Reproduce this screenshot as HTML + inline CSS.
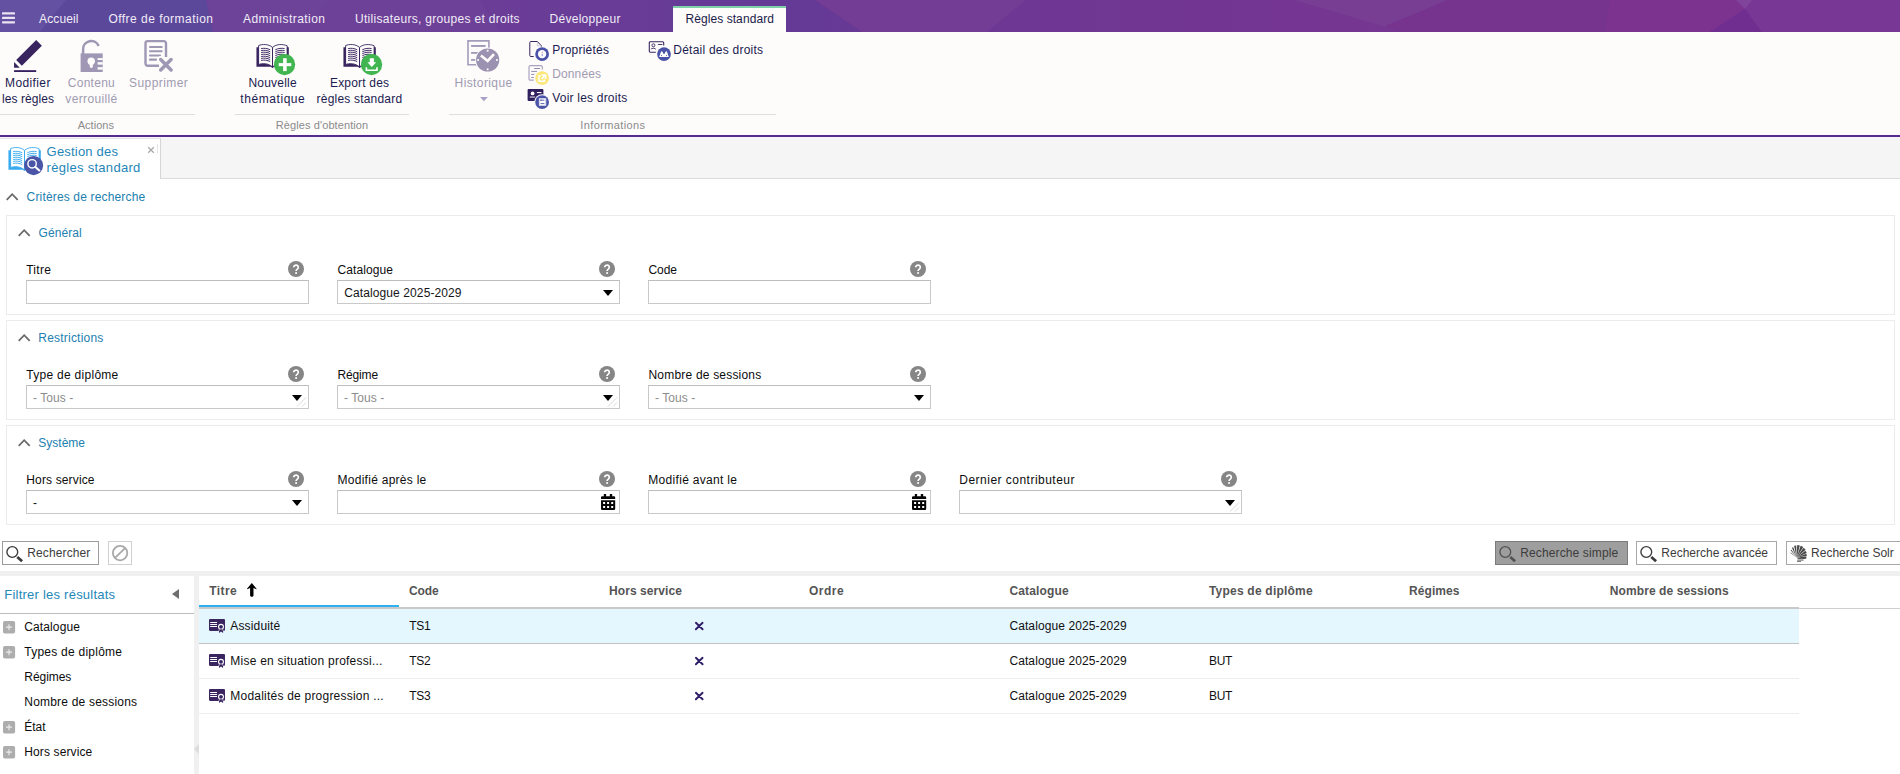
<!DOCTYPE html>
<html lang="fr"><head><meta charset="utf-8"><title>Règles standard</title>
<style>
*{margin:0;padding:0;box-sizing:border-box}
html,body{width:1900px;height:774px;overflow:hidden;background:#fff}
body{position:relative;font-family:"Liberation Sans",sans-serif;font-size:12px;color:#111}
.a,.t,svg.i{position:absolute}
.t{white-space:nowrap;display:block}
svg.i{overflow:visible}
.hdr{left:0;top:0;width:1900px;height:32px}
.atab{left:673px;top:6px;width:113px;height:26px;background:#fdfcfb;border-top:2px solid #7fd0a8}
.rib{left:0;top:32px;width:1900px;height:103px;background:#fdfcfb}
.ribline{left:0;top:135px;width:1900px;height:2px;background:#562a8e}
.gsep{top:114px;height:1px;background:#dedede}
.strip{left:0;top:137px;width:1900px;height:42px;background:#f5f5f5;border-bottom:1px solid #dcdcdc}
.ttab{left:0;top:138px;width:161px;height:41px;background:#fff;border-top:1px solid #e2e2e2;border-right:1px solid #d6d6d6}
.fs{left:6px;width:1889px;height:100px;border:1px solid #ececec;background:#fff}
.in{width:283px;height:24px;border:1px solid #c9c9c9;background:#fff;border-top-color:#bdbdbd}
.btn{top:541px;height:24px;border:1px solid #a8a8a8;background:#fff}
.band{left:0;top:571px;width:1900px;height:5px;background:#f0f0f0}
.split{left:194px;top:576px;width:5px;height:198px;background:#f0f0f0}
.fhdr{left:0;top:613px;width:194px;height:1px;background:#bdbdbd}
.plus{left:3.1px;width:12.1px;height:12.5px;border-radius:1.8px;background:#adadad}
.plus:before{content:"";position:absolute;left:3px;top:5.55px;width:6px;height:1.3px;background:#ececec}
.plus:after{content:"";position:absolute;left:5.35px;top:3.1px;width:1.3px;height:6.2px;background:#ececec}
.help{width:16px;height:16px;border-radius:8px;background:#868686}
.arr{width:0;height:0;border-left:5.5px solid transparent;border-right:5.5px solid transparent;border-top:6px solid #000}

</style></head>
<body>
<svg class="i hdr" viewBox="0 0 1900 32" preserveAspectRatio="none">
<defs><linearGradient id="hg" x1="0" x2="1" y1="0" y2="0">
<stop offset="0" stop-color="#5d499c"/><stop offset="0.25" stop-color="#6b3d97"/><stop offset="0.42" stop-color="#643a96"/>
<stop offset="0.54" stop-color="#6e3793"/><stop offset="0.7" stop-color="#753692"/><stop offset="1" stop-color="#7a3693"/></linearGradient></defs>
<rect width="1900" height="32" fill="url(#hg)"/>
<polygon points="0,0 66,0 40,32 0,32" fill="#6551a1"/>
<polygon points="66,0 206,0 213,32 40,32" fill="#5c489b"/>
<polygon points="206,0 330,0 300,32 213,32" fill="#6c4399"/>
<polygon points="330,0 480,0 500,32 300,32" fill="#6e4198"/>
<polygon points="815,0 1026,0 987,32 862,32" fill="#733c95"/>
<polygon points="1295,0 1447,0 1385,27" fill="#783e94"/>
<polygon points="1385,26 1450,0 1620,0 1620,32 1400,32" fill="#76348f"/>
<polygon points="1610,0 1740,0 1745,9 1710,32 1605,32" fill="#7c328f"/><polygon points="1710,32 1745,9 1762,32" fill="#702e91"/>
<polygon points="1748,0 1900,0 1900,32 1762,32 1745,9" fill="#783794"/><polygon points="1736,0 1752,0 1745,9" fill="#80459a"/>
</svg>
<svg class="i" style="left:2px;top:12px" width="13" height="12" viewBox="0 0 13 12"><g fill="#e9e3f2"><rect y="0.3" width="13" height="2.2" rx=".6"/><rect y="4.8" width="13" height="2.2" rx=".6"/><rect y="9.2" width="13" height="2.2" rx=".6"/></g></svg>
<div class="a atab"></div>
<div class="a rib"></div><div class="a ribline"></div>
<div class="a gsep" style="left:0px;width:195px"></div>
<div class="a gsep" style="left:235px;width:174px"></div>
<div class="a gsep" style="left:449px;width:327px"></div>
<svg class="i" style="left:13px;top:40px" width="30" height="32" viewBox="0 0 30 32"><g fill="#38245f">
<polygon points="23.2,-0.1 28.9,5.7 8.9,25.7 3.2,19.9"/><polygon points="1.05,22.05 1.05,27.8 6.8,27.8"/></g><rect x="1.05" y="30.2" width="22.15" height="1.75" fill="#2c1759"/></svg>
<svg class="i" style="left:80px;top:40px" width="23" height="32" viewBox="0 0 23 32">
<path d="M3.1,14 V9.3 A8.1,8.1 0 0 1 18.64,5.9" fill="none" stroke="#a097b4" stroke-width="2.5"/>
<rect x="0.6" y="13.4" width="22.1" height="18.6" fill="#a097b4"/>
<circle cx="11.2" cy="21.3" r="3.7" fill="#fdfcfb"/><path d="M9.7,22 H12.9 V26.3 a1.6,1.6 0 0 1 -3.2,0 Z" fill="#fdfcfb"/>
<rect x="17.6" y="18.1" width="5.2" height="1.9" fill="#fdfcfb"/><rect x="17.6" y="22.2" width="5.2" height="2.4" fill="#fdfcfb"/><rect x="17.6" y="27.2" width="5.2" height="2.4" fill="#fdfcfb"/></svg>
<svg class="i" style="left:144px;top:40px" width="30" height="32" viewBox="0 0 30 32">
<path d="M22,17 V3.3 a2.2,2.2 0 0 0 -2.2,-2.2 H3.7 a2.2,2.2 0 0 0 -2.2,2.2 V23.6 a2.2,2.2 0 0 0 2.2,2.2 H15" fill="none" stroke="#a097b4" stroke-width="2.4"/>
<g stroke="#a097b4" stroke-width="2.1" stroke-linecap="round"><path d="M6,7.05 H17.7 M6,11.25 H17.7 M6,15.45 H16 M6,19.65 H12"/></g>
<path d="M16.5,19.3 L27.3,30.1 M27.3,19.3 L16.5,30.1" stroke="#fdfcfb" stroke-width="6" stroke-linecap="round"/>
<path d="M16.7,19.5 L27.1,29.9 M27.1,19.5 L16.7,29.9" stroke="#a097b4" stroke-width="3.5" stroke-linecap="round"/></svg>
<svg class="i" style="left:256px;top:43px" width="33" height="26" viewBox="0 0 33 26">
<path d="M2.6,2.6 C6,1.0 12.5,0.8 16.5,4.4 C20.5,0.8 27,1.0 31.2,2.8 V21.6 C27,20 20.5,20.2 16.5,24 C12.5,20.2 6,20 2.6,21.6 Z" fill="#fdfcfb" stroke="#38245f" stroke-width="0.9" stroke-linejoin="round"/>
<path d="M0.45,4.3 H2.8 V21.4 C7,20 13,20.6 16.5,23.9 V25.1 L14.7,23.75 H0.45 Z" fill="#38245f"/>
<path d="M30.9,4.3 H32.8 V23.75 H18.3 L16.5,25.1 V23.9 C20,20.6 26.5,20 30.9,21.4 Z" fill="#38245f"/>
<path d="M16.5,4.4 V24.5" stroke="#38245f" stroke-width="1"/>
<g stroke="#38245f" stroke-width="0.95" fill="none">
<path d="M5.1,5.6 C8,5 11.5,5.3 14.2,6.8 M5.1,7.6 C8,7 11.5,7.3 14.2,8.8 M5.1,9.5 C8,8.9 11.5,9.2 14.2,10.7 M5.1,11.5 C8,10.9 11.5,11.2 14.2,12.7 M5.1,13.5 C8,12.9 11.5,13.2 14.2,14.7 M5.1,15.4 C8,14.8 11.5,15.1 14.2,16.6 M5.1,17.4 C8,16.8 11.5,17.1 14.2,18.6"/>
<path d="M28.6,5.6 C25.7,5 22.2,5.3 19.3,6.8 M28.6,7.6 C25.7,7 22.2,7.3 19.3,8.8 M28.6,9.5 C25.7,8.9 22.2,9.2 19.3,10.7 M28.6,11.5 C25.7,10.9 22.2,11.2 19.3,12.7 M28.6,13.5 C25.7,12.9 22.2,13.2 19.3,14.7 M28.6,15.4 C25.7,14.8 22.2,15.1 19.3,16.6 M28.6,17.4 C25.7,16.8 22.2,17.1 19.3,18.6"/></g></svg>
<svg class="i" style="left:274px;top:54px" width="21.2" height="21.2" viewBox="0 0 21.2 21.2"><circle cx="10.6" cy="10.6" r="10.6" fill="#40b550"/><path d="M10.9,4.2 V17.1" stroke="#fff" stroke-width="3.6"/><path d="M4.7,10.65 H17.3" stroke="#fff" stroke-width="3.1"/></svg>
<svg class="i" style="left:342.7px;top:43px" width="33" height="26" viewBox="0 0 33 26">
<path d="M2.6,2.6 C6,1.0 12.5,0.8 16.5,4.4 C20.5,0.8 27,1.0 31.2,2.8 V21.6 C27,20 20.5,20.2 16.5,24 C12.5,20.2 6,20 2.6,21.6 Z" fill="#fdfcfb" stroke="#38245f" stroke-width="0.9" stroke-linejoin="round"/>
<path d="M0.45,4.3 H2.8 V21.4 C7,20 13,20.6 16.5,23.9 V25.1 L14.7,23.75 H0.45 Z" fill="#38245f"/>
<path d="M30.9,4.3 H32.8 V23.75 H18.3 L16.5,25.1 V23.9 C20,20.6 26.5,20 30.9,21.4 Z" fill="#38245f"/>
<path d="M16.5,4.4 V24.5" stroke="#38245f" stroke-width="1"/>
<g stroke="#38245f" stroke-width="0.95" fill="none">
<path d="M5.1,5.6 C8,5 11.5,5.3 14.2,6.8 M5.1,7.6 C8,7 11.5,7.3 14.2,8.8 M5.1,9.5 C8,8.9 11.5,9.2 14.2,10.7 M5.1,11.5 C8,10.9 11.5,11.2 14.2,12.7 M5.1,13.5 C8,12.9 11.5,13.2 14.2,14.7 M5.1,15.4 C8,14.8 11.5,15.1 14.2,16.6 M5.1,17.4 C8,16.8 11.5,17.1 14.2,18.6"/>
<path d="M28.6,5.6 C25.7,5 22.2,5.3 19.3,6.8 M28.6,7.6 C25.7,7 22.2,7.3 19.3,8.8 M28.6,9.5 C25.7,8.9 22.2,9.2 19.3,10.7 M28.6,11.5 C25.7,10.9 22.2,11.2 19.3,12.7 M28.6,13.5 C25.7,12.9 22.2,13.2 19.3,14.7 M28.6,15.4 C25.7,14.8 22.2,15.1 19.3,16.6 M28.6,17.4 C25.7,16.8 22.2,17.1 19.3,18.6"/></g></svg>
<svg class="i" style="left:361.1px;top:54px" width="21.2" height="21.2" viewBox="0 0 21.2 21.2"><circle cx="10.6" cy="10.6" r="10.6" fill="#40b550"/><path d="M8.75,4.2 h4.15 v4.1 h2.3 l-4.4,4.6 l-4.4,-4.6 h2.35 z" fill="#fff"/><path d="M5.4,13.2 v3.1 h10.6 v-3.1" fill="none" stroke="#fff" stroke-width="1.6"/></svg>
<svg class="i" style="left:467px;top:40px" width="33" height="32" viewBox="0 0 33 32">
<path d="M12,24.7 H1 V0.9 H21.9 V10" fill="none" stroke="#a59bba" stroke-width="1.6"/>
<g fill="#a197b6"><rect x="4.1" y="5" width="14.5" height="1.9"/><rect x="4.1" y="12" width="8" height="1.8"/><rect x="4.1" y="19" width="5.4" height="1.8"/></g>
<circle cx="20.65" cy="20" r="12.5" fill="#fdfcfb"/><circle cx="20.65" cy="20" r="11.6" fill="#9b91b0"/>
<path d="M13.9,15.5 L20.65,21 L27,14.2" fill="none" stroke="#fdfcfb" stroke-width="2.7" stroke-linejoin="miter"/>
<g fill="#fdfcfb"><rect x="19.75" y="9.8" width="1.8" height="1.8"/><rect x="19.75" y="28.4" width="1.8" height="1.8"/><rect x="10.2" y="19.1" width="1.8" height="1.8"/><rect x="29.05" y="19.1" width="1.8" height="1.8"/></g></svg>
<svg class="i" style="left:479.5px;top:96.8px" width="7.8" height="4.3" viewBox="0 0 7.8 4.3"><polygon points="0,0 7.8,0 3.9,4.3" fill="#a9a0c6"/></svg>
<svg class="i" style="left:529px;top:41px" width="21" height="21" viewBox="0 0 21 21">
<path d="M4.7,15.5 H1.8 a1,1 0 0 1 -1,-1 V1.5 a1,1 0 0 1 1,-1 H8.4 L12.4,4.8 V6" fill="none" stroke="#38245f" stroke-width="1"/>
<path d="M8.4,0.9 V4.9 H12" fill="none" stroke="#c9c2d8" stroke-width="0.9"/>
<circle cx="13.1" cy="13.1" r="7.7" fill="#fdfcfb"/><circle cx="13.1" cy="13.1" r="6.9" fill="#4a53a8"/><circle cx="13.1" cy="13.1" r="4.2" fill="#fff"/>
<path d="M13.2,12.6 V15.2" stroke="#8a8fd0" stroke-width="1"/><circle cx="13.3" cy="11.2" r=".6" fill="#c58a9a"/></svg>
<svg class="i" style="left:528px;top:65px" width="22" height="21" viewBox="0 0 22 21">
<path d="M5.8,15.1 H2.2 a1.2,1.2 0 0 1 -1.2,-1.2 V1.9 a1.2,1.2 0 0 1 1.2,-1.2 H13.1 a1.2,1.2 0 0 1 1.2,1.2 V4.6" fill="none" stroke="#aca3c1" stroke-width="1.2"/>
<g stroke="#958bb0" stroke-width="1" stroke-linecap="round"><path d="M6.6,3.5 H11.6 M3.6,6.4 H8.6 M3.6,9.4 H6 M3.6,12.5 H5.4"/></g>
<circle cx="14.1" cy="13.1" r="7.7" fill="#fdfcfb"/><circle cx="14.1" cy="13.1" r="6.9" fill="#fde77a"/>
<path d="M13,11 H10.9 V16.3 H16.4 V14.4" fill="none" stroke="#fff" stroke-width="1.5"/>
<path d="M13.6,9.2 H18.4 V14 H16.9 V11.9 L14.2,14.6 L13,13.4 L15.7,10.7 H13.6 Z" fill="#fff"/></svg>
<svg class="i" style="left:527px;top:89px" width="23" height="21" viewBox="0 0 23 21">
<rect x="0.6" y="0.1" width="15.8" height="11.8" rx="1" fill="#31205e"/>
<circle cx="5.6" cy="4.4" r="1.9" fill="#fff"/><rect x="9.9" y="3" width="4.6" height="1.1" fill="#fff"/><rect x="2.7" y="7.6" width="5.5" height="0.9" fill="#fff"/>
<circle cx="15.1" cy="13.1" r="7.8" fill="#fdfcfb"/><circle cx="15.1" cy="13.1" r="6.9" fill="#4a53a8"/>
<rect x="11.9" y="9.3" width="7.3" height="7.4" fill="#fff"/>
<path d="M13.6,11.2 H17.4 M13.6,14.6 H17.4" stroke="#4a53a8" stroke-width="0.9"/><rect x="13.2" y="10.6" width="1.3" height="1.2" fill="#4a53a8"/>
<path d="M12.6,9.3 V16.7 M18.5,9.3 V16.7" stroke="#c9cbe8" stroke-width="0.8"/></svg>
<svg class="i" style="left:648px;top:41px" width="24" height="21" viewBox="0 0 24 21">
<path d="M7.8,11.2 H2.3 a1,1 0 0 1 -1,-1 V1.7 a1,1 0 0 1 1,-1 H14.7 a1,1 0 0 1 1,1 V4.4" fill="none" stroke="#38245f" stroke-width="1.1"/>
<circle cx="5.4" cy="4.3" r="1.5" fill="none" stroke="#38245f" stroke-width="0.9"/>
<path d="M2.9,8.3 C3.2,6.9 7.6,6.9 7.8,8.3" fill="none" stroke="#38245f" stroke-width="0.9"/>
<path d="M9.9,3.5 H14.4" stroke="#38245f" stroke-width="0.9"/>
<circle cx="16" cy="13.1" r="7.7" fill="#fdfcfb"/><circle cx="16" cy="13.1" r="6.9" fill="#4a53a8"/>
<path d="M11.2,15.9 L12.9,10.9 a0.9,0.9 0 0 1 1.7,0 L15.3,12.8 H16.7 L17.4,10.9 a0.9,0.9 0 0 1 1.7,0 L20.8,15.9 Z" fill="#fff"/>
<circle cx="13.4" cy="14.5" r=".55" fill="#4a53a8"/><circle cx="18.6" cy="14.5" r=".55" fill="#4a53a8"/></svg>
<div class="a strip"></div><div class="a ttab"></div>
<svg class="i" style="left:7.5px;top:145.7px" width="33" height="26" viewBox="0 0 33 26">
<path d="M2.6,2.6 C6,1.0 12.5,0.8 16.5,4.4 C20.5,0.8 27,1.0 31.2,2.8 V21.6 C27,20 20.5,20.2 16.5,24 C12.5,20.2 6,20 2.6,21.6 Z" fill="#fff" stroke="#38aaf0" stroke-width="0.9" stroke-linejoin="round"/>
<path d="M0.45,4.3 H2.8 V21.4 C7,20 13,20.6 16.5,23.9 V25.1 L14.7,23.75 H0.45 Z" fill="#38aaf0"/>
<path d="M30.9,4.3 H32.8 V23.75 H18.3 L16.5,25.1 V23.9 C20,20.6 26.5,20 30.9,21.4 Z" fill="#38aaf0"/>
<path d="M16.5,4.4 V24.5" stroke="#38aaf0" stroke-width="1"/>
<g stroke="#38aaf0" stroke-width="0.95" fill="none">
<path d="M5.1,5.6 C8,5 11.5,5.3 14.2,6.8 M5.1,7.6 C8,7 11.5,7.3 14.2,8.8 M5.1,9.5 C8,8.9 11.5,9.2 14.2,10.7 M5.1,11.5 C8,10.9 11.5,11.2 14.2,12.7 M5.1,13.5 C8,12.9 11.5,13.2 14.2,14.7 M5.1,15.4 C8,14.8 11.5,15.1 14.2,16.6 M5.1,17.4 C8,16.8 11.5,17.1 14.2,18.6"/>
<path d="M28.6,5.6 C25.7,5 22.2,5.3 19.3,6.8 M28.6,7.6 C25.7,7 22.2,7.3 19.3,8.8 M28.6,9.5 C25.7,8.9 22.2,9.2 19.3,10.7 M28.6,11.5 C25.7,10.9 22.2,11.2 19.3,12.7 M28.6,13.5 C25.7,12.9 22.2,13.2 19.3,14.7 M28.6,15.4 C25.7,14.8 22.2,15.1 19.3,16.6 M28.6,17.4 C25.7,16.8 22.2,17.1 19.3,18.6"/></g></svg>
<svg class="i" style="left:23.9px;top:156px" width="19.2" height="19.2" viewBox="0 0 19.2 19.2"><circle cx="9.6" cy="9.6" r="9.55" fill="#4a55a8"/>
<circle cx="8.1" cy="7.8" r="4.2" fill="none" stroke="#fff" stroke-width="1.4"/><path d="M11.4,11 L15.3,14.5" stroke="#fff" stroke-width="2.1" stroke-linecap="round"/></svg>
<svg class="i" style="left:147.5px;top:146.5px" width="6" height="6" viewBox="0 0 6 6"><path d="M0.2,0.2 L5.8,5.8 M5.8,0.2 L0.2,5.8" stroke="#a9a9a9" stroke-width="1.3"/></svg>
<div class="a" style="left:157px;top:144px;width:1px;height:9px;background:#e6e6e6"></div>
<svg class="i" style="left:6px;top:193.3px" width="12.4" height="7.6" viewBox="0 0 12.4 7.6"><path d="M0.7,6.9 L6.2,1.2 L11.7,6.9" fill="none" stroke="#6a6a6a" stroke-width="1.75"/></svg>
<div class="a fs" style="top:215px"></div>
<svg class="i" style="left:17.8px;top:229.3px" width="12.4" height="7.6" viewBox="0 0 12.4 7.6"><path d="M0.7,6.9 L6.2,1.2 L11.7,6.9" fill="none" stroke="#6a6a6a" stroke-width="1.75"/></svg>
<div class="a fs" style="top:320px"></div>
<svg class="i" style="left:17.8px;top:334.3px" width="12.4" height="7.6" viewBox="0 0 12.4 7.6"><path d="M0.7,6.9 L6.2,1.2 L11.7,6.9" fill="none" stroke="#6a6a6a" stroke-width="1.75"/></svg>
<div class="a fs" style="top:425px"></div>
<svg class="i" style="left:17.8px;top:439.3px" width="12.4" height="7.6" viewBox="0 0 12.4 7.6"><path d="M0.7,6.9 L6.2,1.2 L11.7,6.9" fill="none" stroke="#6a6a6a" stroke-width="1.75"/></svg>
<div class="a in" style="left:26px;top:280px"></div>
<svg class="i" style="left:288px;top:261px" width="16" height="16" viewBox="0 0 16 16"><circle cx="8" cy="8" r="8" fill="#868686"/><path d="M5.7,6.3 a2.3,2.2 0 1 1 3.6,1.8 c-.9,.6 -1.2,.9 -1.2,1.8" fill="none" stroke="#fff" stroke-width="1.7"/><circle cx="8.1" cy="12" r="1.05" fill="#fff"/></svg>
<div class="a in" style="left:337px;top:280px"></div>
<svg class="i" style="left:599px;top:261px" width="16" height="16" viewBox="0 0 16 16"><circle cx="8" cy="8" r="8" fill="#868686"/><path d="M5.7,6.3 a2.3,2.2 0 1 1 3.6,1.8 c-.9,.6 -1.2,.9 -1.2,1.8" fill="none" stroke="#fff" stroke-width="1.7"/><circle cx="8.1" cy="12" r="1.05" fill="#fff"/></svg>
<div class="a arr" style="left:602.5px;top:290.2px"></div>
<div class="a in" style="left:648px;top:280px"></div>
<svg class="i" style="left:910px;top:261px" width="16" height="16" viewBox="0 0 16 16"><circle cx="8" cy="8" r="8" fill="#868686"/><path d="M5.7,6.3 a2.3,2.2 0 1 1 3.6,1.8 c-.9,.6 -1.2,.9 -1.2,1.8" fill="none" stroke="#fff" stroke-width="1.7"/><circle cx="8.1" cy="12" r="1.05" fill="#fff"/></svg>
<div class="a in" style="left:26px;top:385px"></div>
<svg class="i" style="left:288px;top:366px" width="16" height="16" viewBox="0 0 16 16"><circle cx="8" cy="8" r="8" fill="#868686"/><path d="M5.7,6.3 a2.3,2.2 0 1 1 3.6,1.8 c-.9,.6 -1.2,.9 -1.2,1.8" fill="none" stroke="#fff" stroke-width="1.7"/><circle cx="8.1" cy="12" r="1.05" fill="#fff"/></svg>
<div class="a arr" style="left:291.5px;top:395.2px"></div>
<svg class="i" style="left:296px;top:396px" width="11" height="11" viewBox="0 0 11 11"><path d="M1,10.5 L10,1.5 M6,10.5 L10,6.5" stroke="#dadada" stroke-width="1"/></svg>
<div class="a in" style="left:337px;top:385px"></div>
<svg class="i" style="left:599px;top:366px" width="16" height="16" viewBox="0 0 16 16"><circle cx="8" cy="8" r="8" fill="#868686"/><path d="M5.7,6.3 a2.3,2.2 0 1 1 3.6,1.8 c-.9,.6 -1.2,.9 -1.2,1.8" fill="none" stroke="#fff" stroke-width="1.7"/><circle cx="8.1" cy="12" r="1.05" fill="#fff"/></svg>
<div class="a arr" style="left:602.5px;top:395.2px"></div>
<svg class="i" style="left:607px;top:396px" width="11" height="11" viewBox="0 0 11 11"><path d="M1,10.5 L10,1.5 M6,10.5 L10,6.5" stroke="#dadada" stroke-width="1"/></svg>
<div class="a in" style="left:648px;top:385px"></div>
<svg class="i" style="left:910px;top:366px" width="16" height="16" viewBox="0 0 16 16"><circle cx="8" cy="8" r="8" fill="#868686"/><path d="M5.7,6.3 a2.3,2.2 0 1 1 3.6,1.8 c-.9,.6 -1.2,.9 -1.2,1.8" fill="none" stroke="#fff" stroke-width="1.7"/><circle cx="8.1" cy="12" r="1.05" fill="#fff"/></svg>
<div class="a arr" style="left:913.5px;top:395.2px"></div>
<div class="a in" style="left:26px;top:490px"></div>
<svg class="i" style="left:288px;top:471px" width="16" height="16" viewBox="0 0 16 16"><circle cx="8" cy="8" r="8" fill="#868686"/><path d="M5.7,6.3 a2.3,2.2 0 1 1 3.6,1.8 c-.9,.6 -1.2,.9 -1.2,1.8" fill="none" stroke="#fff" stroke-width="1.7"/><circle cx="8.1" cy="12" r="1.05" fill="#fff"/></svg>
<div class="a arr" style="left:291.5px;top:500.2px"></div>
<div class="a in" style="left:337px;top:490px"></div>
<svg class="i" style="left:599px;top:471px" width="16" height="16" viewBox="0 0 16 16"><circle cx="8" cy="8" r="8" fill="#868686"/><path d="M5.7,6.3 a2.3,2.2 0 1 1 3.6,1.8 c-.9,.6 -1.2,.9 -1.2,1.8" fill="none" stroke="#fff" stroke-width="1.7"/><circle cx="8.1" cy="12" r="1.05" fill="#fff"/></svg>
<svg class="i" style="left:601px;top:494px" width="14.2" height="16" viewBox="0 0 14.2 16"><g fill="#050505">
<rect x="2.8" y="0" width="2.3" height="3" rx=".5"/><rect x="8.8" y="0" width="2.4" height="3" rx=".5"/>
<path d="M1.2,2.2 H13 a1.2,1.2 0 0 1 1.2,1.2 V4.9 H0 V3.4 a1.2,1.2 0 0 1 1.2,-1.2 Z"/>
<path d="M0,6.3 H14.2 V14.8 a1.2,1.2 0 0 1 -1.2,1.2 H1.2 a1.2,1.2 0 0 1 -1.2,-1.2 Z"/></g>
<g fill="#fff"><rect x="2.1" y="8" width="2" height="2"/><rect x="6.1" y="8" width="2" height="2"/><rect x="10.2" y="8" width="2" height="2"/><rect x="2.1" y="12" width="2" height="2"/><rect x="6.1" y="12" width="2" height="2"/><rect x="10.2" y="12" width="2" height="2"/></g></svg>
<div class="a in" style="left:648px;top:490px"></div>
<svg class="i" style="left:910px;top:471px" width="16" height="16" viewBox="0 0 16 16"><circle cx="8" cy="8" r="8" fill="#868686"/><path d="M5.7,6.3 a2.3,2.2 0 1 1 3.6,1.8 c-.9,.6 -1.2,.9 -1.2,1.8" fill="none" stroke="#fff" stroke-width="1.7"/><circle cx="8.1" cy="12" r="1.05" fill="#fff"/></svg>
<svg class="i" style="left:912px;top:494px" width="14.2" height="16" viewBox="0 0 14.2 16"><g fill="#050505">
<rect x="2.8" y="0" width="2.3" height="3" rx=".5"/><rect x="8.8" y="0" width="2.4" height="3" rx=".5"/>
<path d="M1.2,2.2 H13 a1.2,1.2 0 0 1 1.2,1.2 V4.9 H0 V3.4 a1.2,1.2 0 0 1 1.2,-1.2 Z"/>
<path d="M0,6.3 H14.2 V14.8 a1.2,1.2 0 0 1 -1.2,1.2 H1.2 a1.2,1.2 0 0 1 -1.2,-1.2 Z"/></g>
<g fill="#fff"><rect x="2.1" y="8" width="2" height="2"/><rect x="6.1" y="8" width="2" height="2"/><rect x="10.2" y="8" width="2" height="2"/><rect x="2.1" y="12" width="2" height="2"/><rect x="6.1" y="12" width="2" height="2"/><rect x="10.2" y="12" width="2" height="2"/></g></svg>
<div class="a in" style="left:959px;top:490px"></div>
<svg class="i" style="left:1221px;top:471px" width="16" height="16" viewBox="0 0 16 16"><circle cx="8" cy="8" r="8" fill="#868686"/><path d="M5.7,6.3 a2.3,2.2 0 1 1 3.6,1.8 c-.9,.6 -1.2,.9 -1.2,1.8" fill="none" stroke="#fff" stroke-width="1.7"/><circle cx="8.1" cy="12" r="1.05" fill="#fff"/></svg>
<div class="a arr" style="left:1224.5px;top:500.2px"></div>
<svg class="i" style="left:1229px;top:501px" width="11" height="11" viewBox="0 0 11 11"><path d="M1,10.5 L10,1.5 M6,10.5 L10,6.5" stroke="#dadada" stroke-width="1"/></svg>
<div class="a btn" style="left:2px;width:97px;border-color:#9c9c9c"></div>
<svg class="i" style="left:5.6px;top:546.3px" width="17" height="15" viewBox="0 0 17 15"><circle cx="6.3" cy="6" r="5.4" fill="none" stroke="#3a3a3a" stroke-width="1.35"/><path d="M11.3,10.9 L16.1,15.3" stroke="#3a3a3a" stroke-width="2.7"/></svg>
<div class="a btn" style="left:108px;width:24px;border-color:#d0d0d0"></div>
<svg class="i" style="left:111.9px;top:544.8px" width="16.2" height="16.2" viewBox="0 0 16.2 16.2"><circle cx="8.1" cy="8.1" r="7.2" fill="none" stroke="#a9a9a9" stroke-width="1.8"/><path d="M3.2,12.7 L12.9,3.4" stroke="#a9a9a9" stroke-width="1.8"/></svg>
<div class="a btn" style="left:1495px;width:133px;background:#9e9e9e;border-color:#7b7b7b"></div>
<svg class="i" style="left:1499.3px;top:546.3px" width="17" height="15" viewBox="0 0 17 15"><circle cx="6.3" cy="6" r="5.4" fill="none" stroke="#525252" stroke-width="1.35"/><path d="M11.3,10.9 L16.1,15.3" stroke="#525252" stroke-width="2.7"/></svg>
<div class="a btn" style="left:1636px;width:141px;border-color:#a8a8a8"></div>
<svg class="i" style="left:1640.2px;top:546.3px" width="17" height="15" viewBox="0 0 17 15"><circle cx="6.3" cy="6" r="5.4" fill="none" stroke="#3a3a3a" stroke-width="1.35"/><path d="M11.3,10.9 L16.1,15.3" stroke="#3a3a3a" stroke-width="2.7"/></svg>
<div class="a btn" style="left:1786px;width:120px;border-color:#a8a8a8"></div>
<svg class="i" style="left:1789.7px;top:544.6px" width="17" height="17" viewBox="0 0 17 17"><g fill="#484848"><polygon points="6.6,12.4 0.41,8.00 0.83,7.45"/><polygon points="6.6,12.4 0.66,5.37 1.48,4.75"/><polygon points="6.6,12.4 1.88,2.80 3.33,2.21"/><polygon points="6.6,12.4 4.11,0.87 6.23,0.61"/><polygon points="6.6,12.4 7.20,0.11 9.82,0.53"/><polygon points="6.6,12.4 10.65,0.78 13.26,2.06"/><polygon points="6.6,12.4 13.54,2.85 15.64,4.82"/><polygon points="6.6,12.4 15.46,5.72 16.82,8.06"/><polygon points="6.6,12.4 16.34,8.74 16.91,11.06"/><polygon points="6.6,12.4 16.37,11.61 16.34,13.53"/><rect x="7.6" y="13.1" width="8" height="0.9"/><rect x="7.4" y="14.6" width="6.2" height="0.9"/><rect x="7" y="15.9" width="4" height="0.8"/></g></svg>
<div class="a band"></div><div class="a split"></div><div class="a fhdr"></div>
<svg class="i" style="left:171.5px;top:589px" width="7" height="10" viewBox="0 0 7 10"><polygon points="7,0 7,10 0,5" fill="#6e6e6e"/></svg>
<svg class="i" style="left:194px;top:744px" width="5" height="10" viewBox="0 0 5 10"><polygon points="5,0 5,10 0,5" fill="#dcdcdc"/></svg>
<svg class="i" style="left:3.1px;top:620.5px" width="12.1" height="12.5" viewBox="0 0 12.1 12.5"><rect width="12.1" height="12.5" rx="1.8" fill="#adadad"/><path d="M3.1,6.15 H9 M6,3.2 V9.3" stroke="#ebebeb" stroke-width="1.15"/></svg>
<svg class="i" style="left:3.1px;top:645.5px" width="12.1" height="12.5" viewBox="0 0 12.1 12.5"><rect width="12.1" height="12.5" rx="1.8" fill="#adadad"/><path d="M3.1,6.15 H9 M6,3.2 V9.3" stroke="#ebebeb" stroke-width="1.15"/></svg>
<svg class="i" style="left:3.1px;top:720.5px" width="12.1" height="12.5" viewBox="0 0 12.1 12.5"><rect width="12.1" height="12.5" rx="1.8" fill="#adadad"/><path d="M3.1,6.15 H9 M6,3.2 V9.3" stroke="#ebebeb" stroke-width="1.15"/></svg>
<svg class="i" style="left:3.1px;top:745.5px" width="12.1" height="12.5" viewBox="0 0 12.1 12.5"><rect width="12.1" height="12.5" rx="1.8" fill="#adadad"/><path d="M3.1,6.15 H9 M6,3.2 V9.3" stroke="#ebebeb" stroke-width="1.15"/></svg>
<div class="a" style="left:199px;top:607px;width:1600px;height:2px;background:#c9c9c9"></div>
<div class="a" style="left:1799px;top:608px;width:101px;height:1px;background:#cfcfcf"></div>
<div class="a" style="left:199px;top:605px;width:200px;height:2px;background:#2db1f1"></div>
<div class="a" style="left:199px;top:609px;width:1600px;height:34px;background:#e4f6fe"></div>
<div class="a" style="left:199px;top:643px;width:1600px;height:1px;background:#c2c2c2"></div>
<div class="a" style="left:199px;top:678px;width:1600px;height:1px;background:#ededed"></div>
<div class="a" style="left:199px;top:713px;width:1600px;height:1px;background:#ededed"></div>
<svg class="i" style="left:247.2px;top:582.8px" width="9.6" height="13.7" viewBox="0 0 9.6 13.7"><path d="M4.8,0 L9.4,5.6 C9.7,6.1 9.3,6.4 8.8,6.1 L6.5,4.9 V12.6 a1.1,1.1 0 0 1 -1.1,1.1 H4.2 a1.1,1.1 0 0 1 -1.1,-1.1 V4.9 L0.8,6.1 C0.3,6.4 -0.1,6.1 0.2,5.6 Z" fill="#000"/></svg>
<svg class="i" style="left:209px;top:619px" width="16.4" height="14" viewBox="0 0 16.4 14">
<rect x="0" y="-0.1" width="16" height="12" rx="1.1" fill="#3a2561"/>
<g fill="#fff"><rect x="1.2" y="3" width="6.8" height="1"/><rect x="1.2" y="5" width="6.8" height="1"/><rect x="1.2" y="7" width="6.8" height="1"/></g>
<circle cx="12" cy="7.85" r="2.45" fill="#36235f" stroke="#fff" stroke-width="1.1"/>
<path d="M10,10.4 V14 L12,12.5 L14.1,14 V10.4 Z" fill="#36235f"/><path d="M10.4,10.2 L9.9,11.9 M13.6,10.2 L14.2,11.9" stroke="#fff" stroke-width="0.7"/></svg>
<svg class="i" style="left:694.8px;top:621.9px" width="8.5" height="8.1" viewBox="0 0 8.5 8.1"><path d="M0.9,0.8 L7.6,7.3 M7.6,0.8 L0.9,7.3" stroke="#2f1d68" stroke-width="1.9" stroke-linecap="round"/></svg>
<svg class="i" style="left:209px;top:654px" width="16.4" height="14" viewBox="0 0 16.4 14">
<rect x="0" y="-0.1" width="16" height="12" rx="1.1" fill="#3a2561"/>
<g fill="#fff"><rect x="1.2" y="3" width="6.8" height="1"/><rect x="1.2" y="5" width="6.8" height="1"/><rect x="1.2" y="7" width="6.8" height="1"/></g>
<circle cx="12" cy="7.85" r="2.45" fill="#36235f" stroke="#fff" stroke-width="1.1"/>
<path d="M10,10.4 V14 L12,12.5 L14.1,14 V10.4 Z" fill="#36235f"/><path d="M10.4,10.2 L9.9,11.9 M13.6,10.2 L14.2,11.9" stroke="#fff" stroke-width="0.7"/></svg>
<svg class="i" style="left:694.8px;top:656.9px" width="8.5" height="8.1" viewBox="0 0 8.5 8.1"><path d="M0.9,0.8 L7.6,7.3 M7.6,0.8 L0.9,7.3" stroke="#2f1d68" stroke-width="1.9" stroke-linecap="round"/></svg>
<svg class="i" style="left:209px;top:689px" width="16.4" height="14" viewBox="0 0 16.4 14">
<rect x="0" y="-0.1" width="16" height="12" rx="1.1" fill="#3a2561"/>
<g fill="#fff"><rect x="1.2" y="3" width="6.8" height="1"/><rect x="1.2" y="5" width="6.8" height="1"/><rect x="1.2" y="7" width="6.8" height="1"/></g>
<circle cx="12" cy="7.85" r="2.45" fill="#36235f" stroke="#fff" stroke-width="1.1"/>
<path d="M10,10.4 V14 L12,12.5 L14.1,14 V10.4 Z" fill="#36235f"/><path d="M10.4,10.2 L9.9,11.9 M13.6,10.2 L14.2,11.9" stroke="#fff" stroke-width="0.7"/></svg>
<svg class="i" style="left:694.8px;top:691.9px" width="8.5" height="8.1" viewBox="0 0 8.5 8.1"><path d="M0.9,0.8 L7.6,7.3 M7.6,0.8 L0.9,7.3" stroke="#2f1d68" stroke-width="1.9" stroke-linecap="round"/></svg>
<!-- text -->
<span class="t" id="t0" style="left:39.00px;top:10.64px;font-size:12px;line-height:16px;color:#f1ecf7;letter-spacing:0.135px;">Accueil</span>
<span class="t" id="t1" style="left:108.40px;top:10.64px;font-size:12px;line-height:16px;color:#f1ecf7;letter-spacing:0.476px;">Offre de formation</span>
<span class="t" id="t2" style="left:243.00px;top:10.64px;font-size:12px;line-height:16px;color:#f1ecf7;letter-spacing:0.459px;">Administration</span>
<span class="t" id="t3" style="left:355.00px;top:10.64px;font-size:12px;line-height:16px;color:#f1ecf7;letter-spacing:0.306px;">Utilisateurs, groupes et droits</span>
<span class="t" id="t4" style="left:549.50px;top:10.64px;font-size:12px;line-height:16px;color:#f1ecf7;letter-spacing:0.285px;">Développeur</span>
<span class="t" id="t5" style="left:685.40px;top:10.64px;font-size:12px;line-height:16px;color:#1b1b48;letter-spacing:0.079px;">Règles standard</span>
<span class="t" id="t6" style="left:5.00px;top:74.64px;font-size:12px;line-height:16px;color:#1b1b4f;letter-spacing:0.387px;">Modifier</span>
<span class="t" id="t7" style="left:2.10px;top:90.64px;font-size:12px;line-height:16px;color:#1b1b4f;letter-spacing:0.060px;">les règles</span>
<span class="t" id="t8" style="left:67.80px;top:74.64px;font-size:12px;line-height:16px;color:#a09bb1;letter-spacing:0.271px;">Contenu</span>
<span class="t" id="t9" style="left:65.30px;top:90.64px;font-size:12px;line-height:16px;color:#a09bb1;letter-spacing:0.368px;">verrouillé</span>
<span class="t" id="t10" style="left:129.00px;top:74.64px;font-size:12px;line-height:16px;color:#a09bb1;letter-spacing:0.430px;">Supprimer</span>
<span class="t" id="t11" style="left:248.40px;top:74.64px;font-size:12px;line-height:16px;color:#1b1b4f;letter-spacing:0.228px;">Nouvelle</span>
<span class="t" id="t12" style="left:240.30px;top:90.64px;font-size:12px;line-height:16px;color:#1b1b4f;letter-spacing:0.569px;">thématique</span>
<span class="t" id="t13" style="left:330.00px;top:74.64px;font-size:12px;line-height:16px;color:#1b1b4f;letter-spacing:0.181px;">Export des</span>
<span class="t" id="t14" style="left:316.60px;top:90.64px;font-size:12px;line-height:16px;color:#1b1b4f;letter-spacing:0.199px;">règles standard</span>
<span class="t" id="t15" style="left:454.60px;top:74.64px;font-size:12px;line-height:16px;color:#a09bb1;letter-spacing:0.397px;">Historique</span>
<span class="t" id="t16" style="left:552.20px;top:42.24px;font-size:12px;line-height:16px;color:#1b1b4f;letter-spacing:0.233px;">Propriétés</span>
<span class="t" id="t17" style="left:552.20px;top:66.24px;font-size:12px;line-height:16px;color:#a09bb1;letter-spacing:0.126px;">Données</span>
<span class="t" id="t18" style="left:552.20px;top:90.24px;font-size:12px;line-height:16px;color:#1b1b4f;letter-spacing:0.212px;">Voir les droits</span>
<span class="t" id="t19" style="left:673.30px;top:42.24px;font-size:12px;line-height:16px;color:#1b1b4f;letter-spacing:0.228px;">Détail des droits</span>
<span class="t" id="t20" style="left:77.70px;top:117.99px;font-size:11px;line-height:15px;color:#8b8b8b;letter-spacing:0.037px;">Actions</span>
<span class="t" id="t21" style="left:275.80px;top:117.99px;font-size:11px;line-height:15px;color:#8b8b8b;letter-spacing:0.095px;">Règles d'obtention</span>
<span class="t" id="t22" style="left:580.30px;top:117.99px;font-size:11px;line-height:15px;color:#8b8b8b;letter-spacing:0.379px;">Informations</span>
<span class="t" id="t23" style="left:46.60px;top:142.60px;font-size:13px;line-height:17px;color:#1e86b7;letter-spacing:0.193px;">Gestion des</span>
<span class="t" id="t24" style="left:46.60px;top:158.60px;font-size:13px;line-height:17px;color:#1e86b7;letter-spacing:0.291px;">règles standard</span>
<span class="t" id="t25" style="left:26.60px;top:189.34px;font-size:12px;line-height:16px;color:#2180b0;letter-spacing:0.160px;">Critères de recherche</span>
<span class="t" id="t26" style="left:38.60px;top:225.24px;font-size:12px;line-height:16px;color:#2180b0;letter-spacing:0.049px;">Général</span>
<span class="t" id="t27" style="left:38.30px;top:330.34px;font-size:12px;line-height:16px;color:#2180b0;letter-spacing:0.210px;">Restrictions</span>
<span class="t" id="t28" style="left:38.30px;top:435.34px;font-size:12px;line-height:16px;color:#2180b0;letter-spacing:0.002px;">Système</span>
<span class="t" id="t29" style="left:26.20px;top:261.84px;font-size:12px;line-height:16px;color:#0c0c0c;letter-spacing:0.284px;">Titre</span>
<span class="t" id="t30" style="left:337.40px;top:261.84px;font-size:12px;line-height:16px;color:#0c0c0c;letter-spacing:0.110px;">Catalogue</span>
<span class="t" id="t31" style="left:648.50px;top:261.84px;font-size:12px;line-height:16px;color:#0c0c0c;letter-spacing:-0.062px;">Code</span>
<span class="t" id="t32" style="left:26.30px;top:366.94px;font-size:12px;line-height:16px;color:#0c0c0c;letter-spacing:0.281px;">Type de diplôme</span>
<span class="t" id="t33" style="left:337.50px;top:366.94px;font-size:12px;line-height:16px;color:#0c0c0c;letter-spacing:-0.152px;">Régime</span>
<span class="t" id="t34" style="left:648.50px;top:366.94px;font-size:12px;line-height:16px;color:#0c0c0c;letter-spacing:0.195px;">Nombre de sessions</span>
<span class="t" id="t35" style="left:26.30px;top:472.04px;font-size:12px;line-height:16px;color:#0c0c0c;letter-spacing:0.138px;">Hors service</span>
<span class="t" id="t36" style="left:337.50px;top:472.04px;font-size:12px;line-height:16px;color:#0c0c0c;letter-spacing:0.272px;">Modifié après le</span>
<span class="t" id="t37" style="left:648.30px;top:472.04px;font-size:12px;line-height:16px;color:#0c0c0c;letter-spacing:0.310px;">Modifié avant le</span>
<span class="t" id="t38" style="left:959.30px;top:472.04px;font-size:12px;line-height:16px;color:#0c0c0c;letter-spacing:0.481px;">Dernier contributeur</span>
<span class="t" id="t39" style="left:344.30px;top:284.84px;font-size:12px;line-height:16px;color:#151515;letter-spacing:0.098px;">Catalogue 2025-2029</span>
<span class="t" id="t40" style="left:33.00px;top:389.74px;font-size:12px;line-height:16px;color:#8c8c8c;letter-spacing:0.072px;">- Tous -</span>
<span class="t" id="t41" style="left:344.00px;top:389.74px;font-size:12px;line-height:16px;color:#8c8c8c;letter-spacing:0.072px;">- Tous -</span>
<span class="t" id="t42" style="left:655.00px;top:389.74px;font-size:12px;line-height:16px;color:#8c8c8c;letter-spacing:0.072px;">- Tous -</span>
<span class="t" id="t43" style="left:33.00px;top:494.74px;font-size:12px;line-height:16px;color:#151515;letter-spacing:0.000px;">-</span>
<span class="t" id="t44" style="left:27.30px;top:544.74px;font-size:12px;line-height:16px;color:#3c3c3c;letter-spacing:0.108px;">Rechercher</span>
<span class="t" id="t45" style="left:1520.20px;top:544.74px;font-size:12px;line-height:16px;color:#3c3c3c;letter-spacing:0.130px;">Recherche simple</span>
<span class="t" id="t46" style="left:1661.30px;top:544.74px;font-size:12px;line-height:16px;color:#3c3c3c;letter-spacing:-0.002px;">Recherche avancée</span>
<span class="t" id="t47" style="left:1811.10px;top:544.74px;font-size:12px;line-height:16px;color:#3c3c3c;letter-spacing:-0.001px;">Recherche Solr</span>
<span class="t" id="t48" style="left:4.30px;top:585.50px;font-size:13px;line-height:17px;color:#2388b8;letter-spacing:0.230px;">Filtrer les résultats</span>
<span class="t" id="t49" style="left:24.30px;top:619.14px;font-size:12px;line-height:16px;color:#0c0c0c;letter-spacing:0.110px;">Catalogue</span>
<span class="t" id="t50" style="left:24.30px;top:644.14px;font-size:12px;line-height:16px;color:#0c0c0c;letter-spacing:0.243px;">Types de diplôme</span>
<span class="t" id="t51" style="left:24.30px;top:669.14px;font-size:12px;line-height:16px;color:#0c0c0c;letter-spacing:-0.060px;">Régimes</span>
<span class="t" id="t52" style="left:24.30px;top:694.14px;font-size:12px;line-height:16px;color:#0c0c0c;letter-spacing:0.201px;">Nombre de sessions</span>
<span class="t" id="t53" style="left:24.30px;top:719.14px;font-size:12px;line-height:16px;color:#0c0c0c;letter-spacing:-0.020px;">État</span>
<span class="t" id="t54" style="left:24.30px;top:744.14px;font-size:12px;line-height:16px;color:#0c0c0c;letter-spacing:0.110px;">Hors service</span>
<span class="t" id="t55" style="left:209.30px;top:582.64px;font-size:12px;line-height:16px;color:#545454;font-weight:700;letter-spacing:0.401px;">Titre</span>
<span class="t" id="t56" style="left:409.00px;top:582.64px;font-size:12px;line-height:16px;color:#545454;font-weight:700;letter-spacing:-0.100px;">Code</span>
<span class="t" id="t57" style="left:609.10px;top:582.64px;font-size:12px;line-height:16px;color:#545454;font-weight:700;letter-spacing:0.068px;">Hors service</span>
<span class="t" id="t58" style="left:809.00px;top:582.64px;font-size:12px;line-height:16px;color:#545454;font-weight:700;letter-spacing:0.503px;">Ordre</span>
<span class="t" id="t59" style="left:1009.40px;top:582.64px;font-size:12px;line-height:16px;color:#545454;font-weight:700;letter-spacing:0.173px;">Catalogue</span>
<span class="t" id="t60" style="left:1208.90px;top:582.64px;font-size:12px;line-height:16px;color:#545454;font-weight:700;letter-spacing:0.222px;">Types de diplôme</span>
<span class="t" id="t61" style="left:1409.00px;top:582.64px;font-size:12px;line-height:16px;color:#545454;font-weight:700;letter-spacing:0.078px;">Régimes</span>
<span class="t" id="t62" style="left:1609.80px;top:582.64px;font-size:12px;line-height:16px;color:#545454;font-weight:700;letter-spacing:0.090px;">Nombre de sessions</span>
<span class="t" id="t63" style="left:230.30px;top:618.04px;font-size:12px;line-height:16px;color:#101010;letter-spacing:0.162px;">Assiduité</span>
<span class="t" id="t64" style="left:409.20px;top:618.04px;font-size:12px;line-height:16px;color:#101010;letter-spacing:-0.250px;">TS1</span>
<span class="t" id="t65" style="left:1009.40px;top:618.04px;font-size:12px;line-height:16px;color:#101010;letter-spacing:0.103px;">Catalogue 2025-2029</span>
<span class="t" id="t66" style="left:230.30px;top:653.04px;font-size:12px;line-height:16px;color:#101010;letter-spacing:0.239px;">Mise en situation professi...</span>
<span class="t" id="t67" style="left:409.20px;top:653.04px;font-size:12px;line-height:16px;color:#101010;letter-spacing:-0.250px;">TS2</span>
<span class="t" id="t68" style="left:1009.40px;top:653.04px;font-size:12px;line-height:16px;color:#101010;letter-spacing:0.103px;">Catalogue 2025-2029</span>
<span class="t" id="t69" style="left:1208.90px;top:653.04px;font-size:12px;line-height:16px;color:#101010;letter-spacing:-0.250px;">BUT</span>
<span class="t" id="t70" style="left:230.30px;top:688.04px;font-size:12px;line-height:16px;color:#101010;letter-spacing:0.218px;">Modalités de progression ...</span>
<span class="t" id="t71" style="left:409.20px;top:688.04px;font-size:12px;line-height:16px;color:#101010;letter-spacing:-0.250px;">TS3</span>
<span class="t" id="t72" style="left:1009.40px;top:688.04px;font-size:12px;line-height:16px;color:#101010;letter-spacing:0.103px;">Catalogue 2025-2029</span>
<span class="t" id="t73" style="left:1208.90px;top:688.04px;font-size:12px;line-height:16px;color:#101010;letter-spacing:-0.250px;">BUT</span>
</body></html>
